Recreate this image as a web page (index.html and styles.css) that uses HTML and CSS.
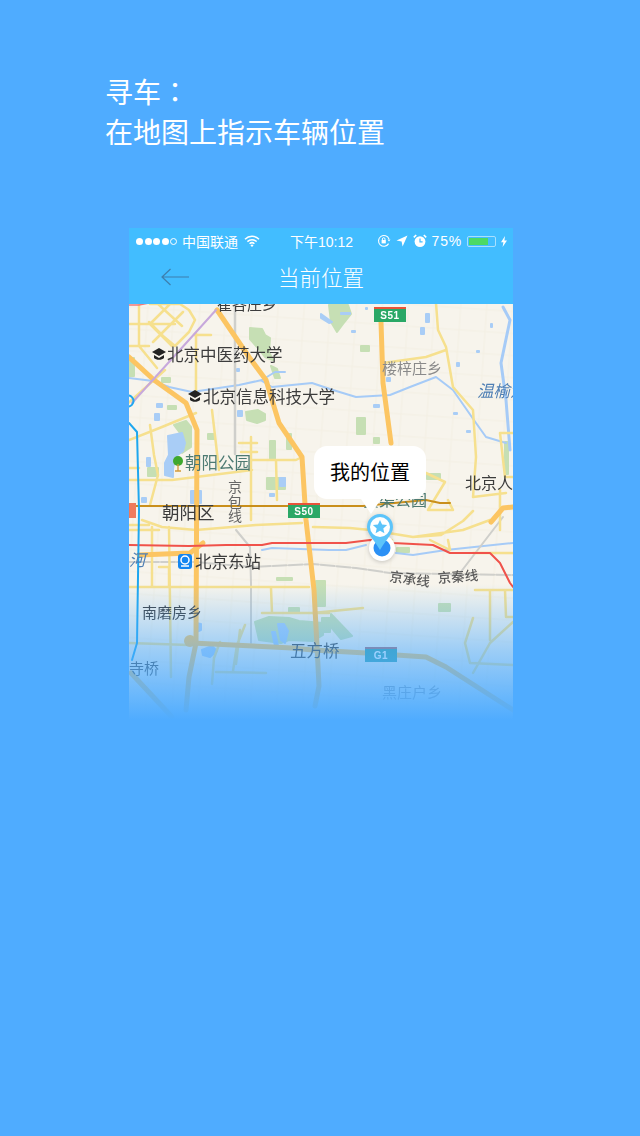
FILE: index.html
```html
<!DOCTYPE html>
<html lang="zh">
<head>
<meta charset="utf-8">
<title>寻车</title>
<link rel="stylesheet" href="styles.css">
</head>
<body>
<h1 class="headline">寻车<span class="colon" lang="zh-Hant">：</span><br>在地图上指示车辆位置</h1>
<div class="phone">
  <div class="appbar">
    <div class="status">
      <div class="status-left">
        <span class="signal"><i></i><i></i><i></i><i></i><i class="off"></i></span>
        <span>中国联通</span>
        <svg class="wifi" width="16" height="12" viewBox="0 0 16 12"><path d="M1 4.200a10 10 0 0 1 14 0M3.400 6.600a6.600 6.600 0 0 1 9.200 0M5.600 8.800a3.400 3.400 0 0 1 4.800 0" fill="none" stroke="#fff" stroke-width="1.500"/><path d="M8 12l-1.500-1.600a2 2 0 0 1 3 0z" fill="#fff"/></svg>
      </div>
      <div class="status-time">下午10:12</div>
      <div class="status-right">
        <svg width="14" height="14" viewBox="0 0 14 14"><path d="M11.600 9.600A5.400 5.400 0 1 1 12 5" fill="none" stroke="#fff" stroke-width="1.100"/><path d="M10.500 5.500h3L12 7.600z" fill="#fff"/><rect x="4.600" y="6" width="4.200" height="3.400" fill="#fff"/><path d="M5.400 6V5a1.300 1.300 0 0 1 2.600 0v1" fill="none" stroke="#fff"/></svg>
        <svg width="12" height="12" viewBox="0 0 12 12"><path d="M11.500.5L6.600 11.500 5.600 6.400.5 5.400z" fill="#fff"/></svg>
        <svg width="14" height="14" viewBox="0 0 14 14"><circle cx="7" cy="7.600" r="5.400" fill="#fff"/><path d="M7 4.500v3.300h2.600" fill="none" stroke="#42bdff" stroke-width="1.200"/><path d="M.8 3.400L3.200 1M13.200 3.400L10.800 1" stroke="#fff" stroke-width="1.600"/></svg>
        <span class="pct">75%</span>
        <span class="battery"><span class="battery-fill"></span></span>
        <svg width="6" height="11" viewBox="0 0 6 11"><path d="M4 0L0 6.200h2.400L1.600 11 6 4.600H3.400z" fill="#fff"/></svg>
      </div>
    </div>
    <div class="nav">
      <svg class="back" width="30" height="20" viewBox="0 0 30 20"><path d="M29 10H2M10.500 2L2 10l8.500 8" fill="none" stroke="#3d7fae" stroke-width="1.200"/></svg>
      <div class="nav-title">当前位置</div>
      <span></span>
    </div>
  </div>
  <div class="map">
    <svg class="map-art" width="384" height="416" viewBox="129 304 384 416">
      <defs>
        <pattern id="streets" width="26" height="22" patternUnits="userSpaceOnUse" patternTransform="rotate(4)">
          <path d="M0 11h26M13 0v22" fill="none" stroke="#f3efe3" stroke-width="1"/>
        </pattern>
      </defs>
      <rect x="129" y="304" width="384" height="416" fill="#f7f4ec"/>
      <rect x="129" y="304" width="384" height="416" fill="url(#streets)"/>
      <g class="green">
        <path d="M250 328l12 1 3 6 5 3-1 14 4 8-8-3-8-10-7-8zM271 366l6 3 3 9-5 0z"/>
        <path d="M329 305h19l3 9-8 10-6 8-6-10z"/>
        <path d="M361 346h8v5h-8zM357 418h8v16h-8zM374 438h5v5h-5zM427 474h13v5h-13z"/>
        <path d="M246 412l12-2 7 4 0 6-8 3-10-3zM208 434h7v5h-7zM174 425l12-4 5 6 0 20-9 6-4-10 2-10zM270 441h5v18h-5zM287 434h4v15h-4zM267 478h18v11h-18z"/>
        <path d="M148 468h10v8h-10zM168 406h8v3h-8zM129 358h5v18h-5zM162 378h8v4h-8zM397 548h12v4h-12z"/>
        <path d="M277 578h15v2h-15zM289 608h10v4h-10zM255 622l14-5 20 1 10 3 24 2 0 12-10 6-24-1-8 3-22-3zM439 604h11v7h-11zM316 581h9v25h-9zM322 618h8v14h-8zM331 614l21 22-11 3-10-12zM505 442h3v32h-3z"/>
      </g>
      <g class="water">
        <path d="M168 436l14-3 3 10-2 8-8 6-2 12 0 8-8-2 0-12 4-8zM155 414h4v6h-4zM157 404h5v3h-5zM147 458h3v8h-3zM142 498h4v4h-4zM191 491h10v12h-10zM237 369h2v2h-2zM238 411h4v5h-4zM280 478h5v8h-5zM270 494h4v2h-4z"/>
        <path d="M321 314l11 8-3 1-8-5zM341 313h9v1h-9zM421 328h3v6h-3zM426 314h3v8h-3zM352 331h3v1h-3zM366 308h1v1h-1zM477 351h2v1h-2zM457 363h2v3h-2zM374 405h5v2h-5zM454 413h3v1h-3zM467 431h3v1h-3zM387 378h3v3h-3zM491 324h1v3h-1zM196 623l5 1 0 6-5 2zM202 650l10-4 5 5-7 6-7-2z"/>
        <path d="M278 624l3 16 4 3 3-12-4-7zM272 632l3 14 3 0-3-14z"/>
      </g>
      <g class="river">
        <path d="M129 378l24 3 16 6 23 5 47-7 23-5 13-8 10 0M262 381l10 6 40-4 21 7 23 7 34-2 20-8 26-10 17 13 23 33 10 14 20 6"/>
        <path d="M503 307l7 13-9 43 5 37 4 50" stroke-width="3"/>
        <path d="M262 550l10-2 57 2 17 0 20-5M396 553l17 2 33-5 67-7"/>
      </g>
      <g class="grey">
        <path d="M235 304v150" stroke-width="2.500"/>
        <path d="M236 530l14 17 1 36v60"/>
        <path d="M129 562l67 0 55 5 62-3 43 4 34 5 123 2" stroke-dasharray="14 2"/>
        <path d="M460 573l43-56"/>
      </g>
      <g class="yellow">
        <path d="M139 304v42l18 22M150 304l30 0 9 6 6 10-6 12-14 14-12-10-14-14M158 304l24 22M172 346l-22-22 20-20M129 324h46M183 312l-30 30M129 346h20"/>
        <path d="M196 333v60M194 335h17M212 410l7 60M196 413l-34 14-33 13M150 425l4 30 4 20-8 30M239 443h18M241 452h16M251 437v83M251 460h45l6-3M129 480h43l24-3 56-7M276 460l1 40M165 370l-40 36M129 468h10"/>
        <path d="M142 520l20 7 34 3 60-5 46-2M169 527l2 150M152 527v60M129 587h180M271 588l1 25M262 613h67M129 643l60 2M245 625l-8 20-4 26M220 642l-6 16-2 26M240 630l-4 34M216 672l50 1M129 530h30M129 525h20M159 567h10v20"/>
        <path d="M313 527l37 1 20 2 43 7 50-7 27-10M436 303l2 27 8 17 7 40 20 23 3 47-3 40M446 350l-20 7-43 6M426 473l19 9-17 28h25l-5-10M500 433h13M500 433l5 44M473 497l33-4M505 477l8 0M500 490l0 40M392 540v10M430 540l20 10-2-10M413 537l28-2 22-14 10-10M473 553h40M475 590h38M490 590v50M505 590l1 27h7M473 618l-8 25 5 20 43 2M513 622l-23 21-17 30M313 613l50-5"/>
      </g>
      <g class="orange">
        <path d="M217 310l32 47 17 23 13 43 23 34 4 63 8 70 3 56 2 40-4 20"/>
        <path d="M129 357l25 23 32 23 11 27-1 213-7 34-3 33"/>
        <path d="M381 322l2 61 8 60"/>
        <path d="M131 673l41 44"/>
        <path d="M139 555l51-2 13-10"/>
        <path d="M491 522l12-14 10-1"/>
      </g>
      <path class="g-road" d="M192 643l100 5 21 2 53 3 60 4 20 10 67 43"/>
      <circle class="g-round" cx="190" cy="641" r="6"/>
      <path class="rail-purple" d="M216 310l-84 93"/>
      <path class="brown" d="M129 506h234l63-6 14 3h10"/>
      <path class="red" d="M129 545l60 1 37-1 36 0 10-2h57l17 0 24-3 23 3 40 2 17 8 40 0 10 10 10 20 3 4"/>
      <path class="subway" d="M129 423l8 9 2 78-2 133-5 17"/>
      <circle class="subway" cx="128" cy="401" r="5.500"/>
      <path class="rail-pink" d="M129 305h10l15-3"/>

      <rect x="374" y="307" width="32" height="15" fill="#2aa866"/><rect x="374" y="307" width="32" height="2" fill="#e8533a"/><text class="shield-t" x="390" y="319">S51</text>
      <rect x="288" y="503" width="32" height="15" fill="#2aa866"/><rect x="288" y="503" width="32" height="2" fill="#e8533a"/><text class="shield-t" x="304" y="515">S50</text>
      <rect x="365" y="647" width="32" height="15" fill="#2f9fa4"/><rect x="365" y="647" width="32" height="2" fill="#a86a70"/><text class="shield-t" x="381" y="659">G1</text>
      <rect x="129" y="503" width="7" height="15" fill="#ef7a5c"/>

      <g class="cap"><path d="M159 348l7 4-7 4-7-4z"/><path d="M154 355v3c2 2.400 8 2.400 10 0v-3l-5 3z"/></g>
      <g class="cap"><path d="M195 390l7 4-7 4-7-4z"/><path d="M190 397v3c2 2.400 8 2.400 10 0v-3l-5 3z"/></g>
      <circle cx="178" cy="461" r="5" fill="#3fa82f"/><path d="M178 464v7M175 471h6" stroke="#d49a3a" stroke-width="1.300" fill="none"/>
      <rect x="178" y="554" width="14" height="15" rx="3" fill="#1486f0"/><circle cx="185" cy="560" r="4" fill="none" stroke="#fff" stroke-width="1.500"/><path d="M181 566h8" stroke="#fff" stroke-width="1.500"/>

      <text class="lb dark s15" x="217" y="310">崔各庄乡</text>
      <text class="lb dark s165" x="167" y="361">北京中医药大学</text>
      <text class="lb dark s165" x="203" y="403">北京信息科技大学</text>
      <text class="lb park s165" x="185" y="469">朝阳公园</text>
      <text class="lb dark s175" x="162" y="519">朝阳区</text>
      <text class="lb mid s14 vert" x="235" y="480">京包线</text>
      <text class="lb dark s165" x="195" y="568">北京东站</text>
      <text class="lb dark s15" x="142" y="618">南磨房乡</text>
      <text class="lb dark s165" x="290" y="657">五方桥</text>
      <text class="lb dark s15" x="129" y="674">寺桥</text>
      <text class="lb bluei s165" x="129" y="566">河</text>
      <text class="lb soft s15" x="382" y="374">楼梓庄乡</text>
      <text class="lb bluei s165" x="477" y="397">温榆河</text>
      <text class="lb dark s16" x="465" y="489">北京人</text>
      <text class="lb park s16" x="363" y="506">黄渠公园</text>
      <text class="lb rail s135" x="389" y="581" transform="rotate(8 389 581)">京承线</text>
      <text class="lb rail s135" x="438" y="583" transform="rotate(-4 438 583)">京秦线</text>
      <text class="lb soft s15" x="382" y="698">黑庄户乡</text>
    </svg>
    <div class="fade"></div>
    <div class="bubble">我的位置</div>
    <svg class="pin" width="40" height="56" viewBox="0 0 40 56">
      <circle cx="21" cy="37" r="13" fill="#fff"/>
      <circle cx="21" cy="37" r="8.500" fill="#2b90f5"/>
      <path d="M19 3a13 13 0 0 1 13 13c0 7-8 14-13 23C14 30 6 23 6 16A13 13 0 0 1 19 3z" fill="#5cc4fa"/>
      <circle cx="19" cy="16" r="10" fill="#fff"/>
      <path d="M19 9l2.100 4.600 5 .5-3.800 3.300 1.100 4.900L19 19.800l-4.400 2.500 1.100-4.900-3.800-3.300 5-.5z" fill="#5cc4fa"/>
    </svg>
  </div>
</div>
</body>
</html>
```
FILE: styles.css
```css
html, body {
  margin: 0;
  padding: 0;
}
body {
  width: 640px;
  height: 1136px;
  overflow: hidden;
  background: #4facff;
  font-family: "Noto Sans CJK SC", "Noto Sans", sans-serif;
  color: #fff;
}
.headline {
  margin: 0;
  padding: 71px 0 0 105px;
  font-size: 28px;
  line-height: 40px;
  font-weight: 400;
}
.colon {
  font-family: "Noto Sans CJK TC", sans-serif;
  font-weight: 400;
}
.phone {
  width: 384px;
  margin: 77px 0 0 129px;
}
.appbar {
  background: #42bdff;
  height: 76px;
}
.status {
  height: 26px;
  display: grid;
  grid-template-columns: 1fr auto 1fr;
  align-items: center;
  font-family: "Liberation Sans", "Noto Sans CJK SC", sans-serif;
  font-size: 14px;
  padding: 0 6px 0 7px;
}
.status-left, .status-right {
  display: flex;
  align-items: center;
}
.status-left { gap: 5px; }
.status-right { justify-content: flex-end; gap: 5px; }
.signal {
  display: flex;
  gap: 1.500px;
}
.signal i {
  width: 7px;
  height: 7px;
  border-radius: 50%;
  background: #fff;
}
.signal i.off {
  background: transparent;
  border: 1px solid #fff;
  width: 5px;
  height: 5px;
}
.wifi { margin-left: 1px; }
.pct { letter-spacing: 0.800px; }
.battery {
  position: relative;
  width: 25px;
  height: 7px;
  padding: 1px;
  border: 1px solid #a8e0ff;
  border-radius: 2px;
  display: block;
}
.battery-fill {
  display: block;
  width: 75%;
  height: 100%;
  background: #4cd964;
}
.nav {
  height: 50px;
  display: grid;
  grid-template-columns: 1fr auto 1fr;
  align-items: center;
  padding-bottom: 4px;
  box-sizing: border-box;
}
.back { margin-left: 31px; }
.nav-title {
  font-size: 21.500px;
  font-weight: 300;
  line-height: 46px;
}
.map {
  position: relative;
  width: 384px;
  height: 416px;
  overflow: hidden;
}
.map-art {
  display: block;
  filter: blur(0.5px);
}
.green { fill: #c6dfb4; stroke: #c6dfb4; stroke-width: 2; stroke-linejoin: round; }
.water { fill: #a9cdf6; stroke: #a9cdf6; stroke-width: 2; stroke-linejoin: round; }
.river, .grey, .yellow, .orange, .g-road, .rail-purple, .brown, .red, .subway, .rail-pink {
  fill: none;
  stroke-linejoin: round;
  stroke-linecap: round;
}
.river { stroke: #a6cbf7; stroke-width: 2; }
.grey { stroke: #cfcfcb; stroke-width: 2; }
.yellow { stroke: #f6e08e; stroke-width: 2.500; }
.orange { stroke: #fcc562; stroke-width: 5; }
.g-road { stroke: #fcc562; stroke-width: 5; }
.g-round { fill: #fcc562; }
.rail-purple { stroke: #c7a8dc; stroke-width: 2; }
.brown { stroke: #c98f1c; stroke-width: 2; }
.red { stroke: #f0524a; stroke-width: 2; }
.subway { stroke: #1ea7ef; stroke-width: 2; fill: none; }
.rail-pink { stroke: #f07a7a; stroke-width: 1.500; }
.cap { fill: #222; }
.shield-t {
  font-family: "Liberation Sans", sans-serif;
  font-size: 10px;
  font-weight: 700;
  fill: #fff;
  text-anchor: middle;
  letter-spacing: 0.500px;
}
.lb {
  font-family: "Noto Sans CJK SC", sans-serif;
  font-weight: 400;
}
.vert { writing-mode: vertical-rl; letter-spacing: 0.500px; }
.dark { fill: #3c3c3c; }
.mid { fill: #666; }
.soft { fill: #8a8a8a; }
.park { fill: #4d7a72; }
.bluei { fill: #4f7fb4; font-style: italic; }
.rail { fill: #5a5a5a; font-weight: 500; }
.s135 { font-size: 13.500px; }
.s14 { font-size: 14px; }
.s15 { font-size: 15px; }
.s16 { font-size: 16px; }
.s165 { font-size: 16.500px; }
.s175 { font-size: 17.500px; }
.fade {
  position: absolute;
  left: 0;
  right: 0;
  top: 280px;
  bottom: 0;
  background: linear-gradient(to bottom, rgba(79,172,255,0) 0%, rgba(79,172,255,0.55) 50%, rgba(79,172,255,1) 100%);
}
.bubble {
  position: absolute;
  left: 185px;
  top: 142px;
  width: 112px;
  height: 53px;
  border-radius: 13px;
  background: #fff;
  color: #000;
  font-size: 20px;
  font-weight: 400;
  line-height: 51px;
  text-align: center;
}
.bubble::after {
  content: "";
  position: absolute;
  left: 47px;
  top: 53px;
  border-left: 10px solid transparent;
  border-right: 10px solid transparent;
  border-top: 15px solid #fff;
}
.pin {
  position: absolute;
  left: 232px;
  top: 207px;
  filter: drop-shadow(0 1px 2px rgba(0, 0, 0, 0.2));
}
```
